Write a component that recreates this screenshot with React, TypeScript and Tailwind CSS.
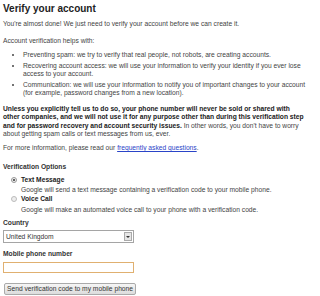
export default function App() {
  return (
    <div className="w-[320px] h-[296px] bg-white overflow-hidden px-[3px] pt-[2px] font-['Liberation_Sans',Arial,sans-serif] text-[6.7px] leading-[8px] text-[#444]">
      <h1 className="text-[10px] leading-[13px] font-bold text-[#222]">Verify your account</h1>
      <p className="mt-[5px]">You're almost done! We just need to verify your account before we can create it.</p>
      <p className="mt-[9px]">Account verification helps with:</p>
      <ul className="mt-[6px] pl-[20px] pr-[8px] list-disc space-y-[3px]">
        <li>Preventing spam: we try to verify that real people, not robots, are creating accounts.</li>
        <li>Recovering account access: we will use your information to verify your identity if you ever lose access to your account.</li>
        <li>Communication: we will use your information to notify you of important changes to your account (for example, password changes from a new location).</li>
      </ul>
      <p className="mt-[8px] leading-[8.3px] whitespace-nowrap">
        <b className="text-[#1a1a1a]">
          Unless you explicitly tell us to do so, your phone number will never be sold or shared with<br />
          other companies, and we will not use it for any purpose other than during this verification step<br />
          and for password recovery and account security issues.
        </b>{' '}
        In other words, you don't have to worry<br />
        about getting spam calls or text messages from us, ever.
      </p>
      <p className="mt-[6px]">
        For more information, please read our <a className="text-[#2a44c8] underline">frequently asked questions</a>.
      </p>
      <div className="mt-[11px] font-bold text-[#333]">Verification Options</div>
      <div className="pl-[8px]">
        <div className="mt-[5px] flex items-center gap-[4px]">
          <span className="w-[6px] h-[6px] rounded-full border border-[#999] bg-[#eee] flex items-center justify-center">
            <span className="w-[2px] h-[2px] rounded-full bg-[#333]" />
          </span>
          <span className="font-bold text-[#222]">Text Message</span>
        </div>
        <div className="pl-[10px] mt-[2px]">Google will send a text message containing a verification code to your mobile phone.</div>
        <div className="flex items-center gap-[4px] mt-[1px]">
          <span className="w-[6px] h-[6px] rounded-full border border-[#bbb] bg-[#eee]" />
          <span className="font-bold text-[#222]">Voice Call</span>
        </div>
        <div className="pl-[10px] mt-[3px]">Google will make an automated voice call to your phone with a verification code.</div>
      </div>
      <div className="mt-[5px] font-bold text-[#333]">Country</div>
      <div className="mt-[3px] w-[131px] h-[13px] border border-[#a5a5a5] bg-white flex items-center">
        <span className="flex-1 pl-[2px] text-[#333]">United Kingdom</span>
        <span className="w-[8px] h-[9px] mr-[1px] border border-[#aaa] bg-[#e6e6e6] flex items-center justify-center">
          <span className="w-0 h-0 border-l-[2px] border-r-[2px] border-t-[2px] border-l-transparent border-r-transparent border-t-[#333]" />
        </span>
      </div>
      <div className="mt-[7px] font-bold text-[#333]">Mobile phone number</div>
      <div className="mt-[4px] w-[131px] h-[11px] border border-[#e0b070] bg-white" />
      <button className="mt-[10px] ml-[1px] h-[12px] px-[2px] border border-[#aaa] rounded-[2px] bg-gradient-to-b from-[#f6f6f6] to-[#dcdcdc] text-[#333] text-[6.7px] leading-[8px]">
        Send verification code to my mobile phone
      </button>
    </div>
  )
}
